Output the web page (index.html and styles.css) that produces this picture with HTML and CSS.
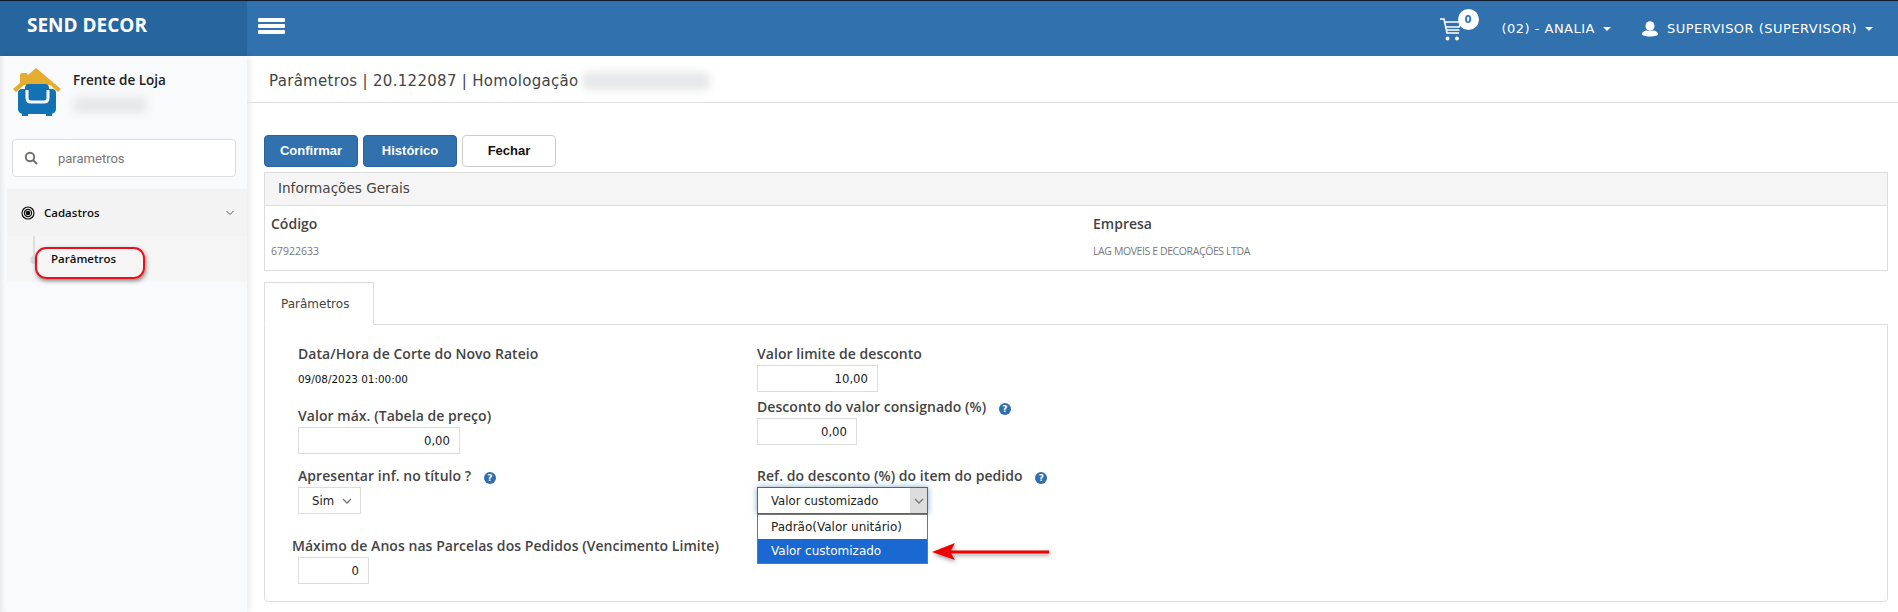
FILE: index.html
```html
<!doctype html>
<html>
	<head>
		<meta charset="utf-8">
		<title>Send Decor - Parâmetros</title>
		<link rel="stylesheet" href="styles.css">
	</head>
	<body>
		<header class="topbar">
			<div class="brand">SEND DECOR</div>
			<div class="topbar-main">
				<div class="burger"><span></span><span></span><span></span></div>
				<div class="top-right">
					<div class="cart">
						<svg width="24" height="24" viewBox="0 0 24 24" fill="none" stroke="#fff" stroke-width="1.5">
							<path d="M1 2h4l3 14h12"/>
							<path d="M5.500 5H22l-2 5H7M7.500 13h13"/>
							<circle cx="8.500" cy="21.500" r="1.900" fill="#fff" stroke="none"/>
							<circle cx="18" cy="21.500" r="1.900" fill="#fff" stroke="none"/>
						</svg>
						<span class="cart-badge">0</span>
					</div>
					<div class="top-item store">(02) - ANALIA <i class="caret"></i></div>
					<div class="top-item">
						<svg width="16" height="16" viewBox="0 0 16 16" fill="#fff">
							<ellipse cx="8" cy="5" rx="4.500" ry="4.800"/>
							<path d="M0 13c0-2 3-3.500 5-3.500 1 .8 5 .8 6 0 2 0 5 1.500 5 3.500 0 1.500-3 2.500-8 2.500s-8-1-8-2.500z"/>
						</svg>
						<span class="user-name">SUPERVISOR (SUPERVISOR)</span> <i class="caret"></i>
					</div>
				</div>
			</div>
		</header>

		<div class="layout">
			<aside class="sidebar">
				<div class="profile">
					<svg class="logo" width="50" height="50" viewBox="0 0 50 50">
						<path d="M1 22 L8 16 V8 Q8 6 10 6 H14 Q16 6 16 8 L24 1 L49 22 L46 25 L38 18 H12 L4 25 Z" fill="#e6ac2e"/>
						<path d="M13 21a4 4 0 0 1 4-4h16a4 4 0 0 1 4 4v1h3a4 4 0 0 1 4 4v16a5 5 0 0 1-5 5H11a5 5 0 0 1-5-5V26a4 4 0 0 1 4-4h3z" fill="#1272b4"/>
						<path d="M15 23V31Q15 35 19 35H32Q36 35 36 31V23" fill="none" stroke="#f9fafc" stroke-width="3"/>
						<rect x="10" y="46" width="6" height="3" fill="#1272b4"/>
						<rect x="34" y="46" width="6" height="3" fill="#1272b4"/>
					</svg>
					<div>
						<div class="profile-name">Frente de Loja</div>
						<div class="blur-text short"></div>
					</div>
				</div>
				<div class="search">
					<svg width="14" height="14" viewBox="0 0 14 14" fill="none" stroke="#77706a" stroke-width="2">
						<circle cx="6" cy="6" r="4.200"/>
						<path d="M9 9l4 4"/>
					</svg>
					<span>parametros</span>
				</div>
				<nav class="menu">
					<div class="menu-head">
						<svg width="14" height="14" viewBox="0 0 14 14" fill="none" stroke="#111" stroke-width="1.200">
							<circle cx="7" cy="7" r="6"/>
							<circle cx="7" cy="7" r="3.600"/>
							<circle cx="7" cy="7" r="1.700" fill="#111"/>
						</svg>
						<span class="menu-title">Cadastros</span>
						<svg class="menu-chevron" width="8" height="6" viewBox="0 0 8 6" fill="none" stroke="#555" stroke-width="1">
							<path d="M.5 1l3.500 3.500L7.500 1"/>
						</svg>
					</div>
					<div class="menu-sub">
						<span class="menu-dot"></span>
						<span class="menu-link">Parâmetros</span>
						<span class="menu-mark"></span>
					</div>
				</nav>
			</aside>

			<main class="content">
				<div class="page-title">
					<span>Parâmetros | 20.122087 | Homologação</span>
					<span class="blur-text wide"></span>
				</div>
				<div class="page-body">
					<div class="actions">
						<button type="button" class="btn primary">Confirmar</button>
						<button type="button" class="btn primary">Histórico</button>
						<button type="button" class="btn plain">Fechar</button>
					</div>

					<section class="panel">
						<div class="panel-head">Informações Gerais</div>
						<div class="panel-body">
							<div class="info">
								<div class="info-label">Código</div>
								<div class="info-value">67922633</div>
							</div>
							<div class="info">
								<div class="info-label">Empresa</div>
								<div class="info-value company">LAG MOVEIS E DECORAÇÕES LTDA</div>
							</div>
						</div>
					</section>

					<div class="tab">Parâmetros</div>
					<section class="tab-pane">
						<div class="col col-left">
							<div class="field">
								<label>Data/Hora de Corte do Novo Rateio</label>
								<div class="static">09/08/2023 01:00:00</div>
							</div>
							<div class="field price-field">
								<label>Valor máx. (Tabela de preço)</label>
								<div class="input w162">0,00</div>
							</div>
							<div class="field title-field">
								<label>Apresentar inf. no título ? <i class="help">?</i></label>
								<div class="input select w63">Sim
									<svg width="10" height="6" viewBox="0 0 10 6" fill="none" stroke="#777" stroke-width="1.300"><path d="M1 1l4 4 4-4"/></svg>
								</div>
							</div>
							<div class="field years-field">
								<label class="outdent">Máximo de Anos nas Parcelas dos Pedidos (Vencimento Limite)</label>
								<div class="input w71">0</div>
							</div>
						</div>
						<div class="col col-right">
							<div class="field">
								<label>Valor limite de desconto</label>
								<div class="input w121">10,00</div>
							</div>
							<div class="field consign-field">
								<label>Desconto do valor consignado (%) <i class="help">?</i></label>
								<div class="input w100">0,00</div>
							</div>
							<div class="field ref-field">
								<label>Ref. do desconto (%) do item do pedido <i class="help">?</i></label>
								<div class="dropdown">
									<div class="dropdown-current">
										<span>Valor customizado</span>
										<span class="dropdown-arrow">
											<svg width="10" height="6" viewBox="0 0 10 6" fill="none" stroke="#777" stroke-width="1.300"><path d="M1 1l4 4 4-4"/></svg>
										</span>
									</div>
									<div class="dropdown-list">
										<div class="dropdown-option">Padrão(Valor unitário)</div>
										<div class="dropdown-option selected">Valor customizado</div>
									</div>
									<svg class="arrow-note" width="120" height="26" viewBox="0 0 120 26">
										<path d="M1 12 L24 3 L20 10.500 L118 10.500 L118 13.500 L20 13.500 L24 20 Z" fill="#ee0000"/>
									</svg>
								</div>
							</div>
						</div>
					</section>
				</div>
			</main>
		</div>
	</body>
</html>
```

FILE: styles.css
```css
* {
	box-sizing: border-box;
}
html, body {
	height: 100%;
}
body {
	margin: 0;
	overflow: hidden;
	background-color: #fff;
	border-top: 1px solid #0d1b2c;
	color: #444;
	font: 13px "DejaVu Sans", sans-serif;
}
.topbar {
	display: flex;
	height: 55px;
	background-color: #3071ae;
	color: #fff;
}
.brand {
	width: 247px;
	padding: 11px 0 0 27px;
	background-color: #27659f;
	font: bold 19px "Open Sans", sans-serif;
}
.topbar-main {
	flex: 1;
	display: flex;
	align-items: center;
	justify-content: space-between;
	padding: 0 25px 6px 11px;
}
.burger {
	display: flex;
	flex-direction: column;
	gap: 2px;
	width: 27px;
}
.burger span {
	height: 4px;
	background-color: #fff;
	border-radius: 1px;
}
.top-right {
	display: flex;
	align-items: center;
	font-size: 13px;
	letter-spacing: .48px;
}
.cart {
	position: relative;
	width: 24px;
	height: 24px;
	margin: 6px 39px 0 0;
}
.cart-badge {
	position: absolute;
	top: -8px;
	left: 19px;
	width: 21px;
	height: 21px;
	background-color: #fff;
	border-radius: 50%;
	color: #3071ae;
	font: bold 10px/21px "DejaVu Sans", sans-serif;
	letter-spacing: 0;
	text-align: center;
}
.top-item {
	display: flex;
	align-items: center;
	margin-top: 6px;
}
.store {
	margin-right: 31px;
}
.user-name {
	margin-left: 9px;
}
.caret {
	display: inline-block;
	width: 0;
	height: 0;
	margin-left: 8px;
	border-top: 4px solid #fff;
	border-left: 4px solid transparent;
	border-right: 4px solid transparent;
}
.layout {
	display: flex;
	height: 556px;
}
.sidebar {
	width: 247px;
	padding-left: 7px;
	background-color: #f9fafc;
	box-shadow: 3px 0 6px rgba(0, 0, 0, .08), inset 6px 0 5px -4px rgba(0, 0, 0, .08);
}
.profile {
	display: flex;
	height: 83px;
	padding: 11px 0 0 5px;
	gap: 11px;
}
.profile-name {
	margin-top: 4px;
	color: #222;
	font: 600 13.500px "Open Sans", sans-serif;
}
.blur-text {
	display: block;
	background-color: #e6e7e9;
	border-radius: 6px;
	filter: blur(4px);
}
.blur-text.short {
	width: 74px;
	height: 16px;
	margin-top: 8px;
}
.blur-text.wide {
	width: 128px;
	height: 18px;
}
.search {
	display: flex;
	align-items: center;
	width: 224px;
	height: 38px;
	margin: 0 0 12px 5px;
	padding-left: 11px;
	background-color: #fff;
	border: 1px solid #ddd;
	border-radius: 4px;
	color: #777;
	font: 13px "Roboto", sans-serif;
}
.search span {
	margin-left: 20px;
}
.menu-head {
	display: flex;
	align-items: center;
	height: 47px;
	padding: 0 13px 0 14px;
	background-color: #f3f3f3;
}
.menu-title {
	flex: 1;
	margin-left: 9px;
	color: #111;
	font: 600 11.500px "Open Sans", sans-serif;
}
.menu-sub {
	position: relative;
	height: 46px;
	padding: 15px 0 0 44px;
	background-color: #f5f5f5;
	color: #111;
	font: 600 11.500px "Open Sans", sans-serif;
}
.menu-sub::before {
	content: "";
	position: absolute;
	top: 0;
	bottom: 24px;
	left: 26px;
	width: 2px;
	background-color: #ddd;
}
.menu-dot {
	position: absolute;
	top: 20px;
	left: 23px;
	width: 8px;
	height: 8px;
	background-color: #ddd;
	border-radius: 50%;
}
.menu-mark {
	position: absolute;
	top: 11px;
	left: 28px;
	width: 110px;
	height: 32px;
	border: 2px solid #e8101c;
	border-radius: 11px;
	box-shadow: 1px 2px 4px rgba(0, 0, 0, .45);
}
.content {
	flex: 1;
	min-width: 0;
}
.page-title {
	display: flex;
	align-items: center;
	height: 47px;
	padding: 4px 0 0 22px;
	gap: 3px;
	border-bottom: 1px solid #ddd;
	font-size: 15px;
	letter-spacing: .3px;
}
.page-body {
	padding: 32px 10px 0 17px;
}
.actions {
	display: flex;
	gap: 5px;
	margin-bottom: 5px;
}
.btn {
	height: 32px;
	padding-bottom: 3px;
	border-radius: 4px;
	font: bold 13px "Liberation Sans", sans-serif;
}
.primary {
	width: 94px;
	background-color: #3071ae;
	border: 1px solid #2a6399;
	color: #fff;
}
.plain {
	width: 94px;
	background-color: #fff;
	border: 1px solid #ccc;
	color: #111;
}
.panel {
	height: 99px;
	margin-bottom: 11px;
	border: 1px solid #ddd;
}
.panel-head {
	height: 33px;
	padding: 7px 13px;
	background-color: #f5f5f5;
	border-bottom: 1px solid #ddd;
	font-size: 13.600px;
}
.panel-body {
	display: flex;
	padding: 8px 6px;
}
.info:first-child {
	width: 822px;
}
.info-label {
	color: #444;
	font: 600 14px "Open Sans", sans-serif;
}
.info-value {
	margin-top: 11px;
	color: #777;
	font: 10.500px "Open Sans", sans-serif;
}
.company {
	letter-spacing: -.4px;
}
.tab {
	position: relative;
	width: 110px;
	height: 43px;
	margin-bottom: -1px;
	padding: 14px 16px;
	background-color: #fff;
	border: 1px solid #ddd;
	border-bottom-color: #fff;
	font-size: 12px;
}
.tab-pane {
	display: flex;
	height: 278px;
	padding: 18px 0 0 33px;
	border: 1px solid #ddd;
	border-radius: 0 0 4px 4px;
}
.col-left {
	width: 459px;
}
.field label {
	display: block;
	height: 22px;
	color: #444;
	font: 600 14px/21px "Open Sans", sans-serif;
	letter-spacing: .05px;
}
.outdent {
	margin-left: -6px;
	white-space: nowrap;
}
.static {
	margin-top: 7px;
	color: #111;
	font-size: 10.400px;
	line-height: 14px;
}
.price-field {
	margin-top: 19px;
}
.title-field {
	margin-top: 11px;
}
.years-field {
	margin-top: 21px;
}
.consign-field {
	margin-top: 4px;
}
.ref-field {
	margin-top: 20px;
}
.input {
	display: flex;
	align-items: center;
	justify-content: flex-end;
	height: 27px;
	padding: 0 9px;
	background-color: #fff;
	border: 1px solid #ddd;
	color: #222;
	font-size: 11.700px;
}
.select {
	justify-content: space-between;
	padding: 0 8px 0 13px;
}
.w162 { width: 162px; }
.w121 { width: 121px; }
.w100 { width: 100px; }
.w71 { width: 71px; }
.w63 { width: 63px; }
.help {
	display: inline-block;
	width: 12px;
	height: 12px;
	margin-left: 9px;
	background-color: #2f6fae;
	border-radius: 50%;
	color: #fff;
	font: bold 9px/12px "DejaVu Sans", sans-serif;
	letter-spacing: 0;
	text-align: center;
}
.dropdown {
	position: relative;
	width: 171px;
}
.dropdown-current {
	display: flex;
	align-items: center;
	justify-content: space-between;
	height: 27px;
	padding-left: 13px;
	background-color: #fff;
	border: 1px solid #2f6fae;
	box-shadow: 0 0 6px rgba(48, 113, 174, .6);
	color: #222;
	font-size: 11.700px;
}
.dropdown-current > span:first-child {
	padding-top: 1px;
}
.dropdown-arrow {
	display: flex;
	align-items: center;
	justify-content: center;
	width: 17px;
	height: 100%;
	background-color: #dcdcdc;
}
.dropdown-list {
	position: absolute;
	top: 27px;
	left: 0;
	width: 171px;
	background-color: #fff;
	border: 1px solid #767676;
	color: #222;
	font-size: 12px;
}
.dropdown-option {
	height: 24px;
	padding: 5px 13px;
}
.selected {
	background-color: #1a68d1;
	color: #fff;
}
.arrow-note {
	position: absolute;
	top: 53px;
	left: 174px;
	filter: drop-shadow(1px 2px 2px rgba(0, 0, 0, .4));
}
```
